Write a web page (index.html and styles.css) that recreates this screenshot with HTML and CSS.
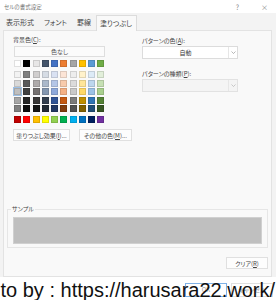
FILE: index.html
```html
<!DOCTYPE html>
<html lang="ja">
<head>
<meta charset="utf-8">
<link rel="stylesheet" href="styles.css">
</head>
<body>
<div class="dialog">
  <div class="titlebar">
    <span class="title">セルの書式設定</span>
    <span class="tb-btns"><span class="help">?</span><span class="close">×</span></span>
  </div>
  <div class="tabs">
    <span class="tab t1">表示形式</span>
    <span class="tab t2">フォント</span>
    <span class="tab t3">罫線</span>
    <span class="tab t4 active">塗りつぶし</span>
  </div>
  <div class="panel">
    <div class="cols">
      <div class="left">
        <div class="label">背景色(<u>C</u>):</div>
        <div class="nocolor">色なし</div>
        <div class="grid g-theme">
          <i style="background:#FFFFFF"></i><i style="background:#000000"></i><i style="background:#E7E6E6"></i><i style="background:#44546A"></i><i style="background:#4472C4"></i><i style="background:#ED7D31"></i><i style="background:#A5A5A5"></i><i style="background:#FFC000"></i><i style="background:#5B9BD5"></i><i style="background:#70AD47"></i>
        </div>
        <div class="grid g-shades">
          <i style="background:#F2F2F2"></i><i style="background:#7F7F7F"></i><i style="background:#D0CECE"></i><i style="background:#D6DCE4"></i><i style="background:#D9E1F2"></i><i style="background:#FCE4D6"></i><i style="background:#EDEDED"></i><i style="background:#FFF2CC"></i><i style="background:#DDEBF7"></i><i style="background:#E2EFDA"></i>
          <i style="background:#D9D9D9"></i><i style="background:#595959"></i><i style="background:#AEAAAA"></i><i style="background:#ACB9CA"></i><i style="background:#B4C6E7"></i><i style="background:#F8CBAD"></i><i style="background:#DBDBDB"></i><i style="background:#FFE699"></i><i style="background:#BDD7EE"></i><i style="background:#C6E0B4"></i>
          <i class="sel" style="background:#BFBFBF"></i><i style="background:#404040"></i><i style="background:#757171"></i><i style="background:#8497B0"></i><i style="background:#8EA9DB"></i><i style="background:#F4B084"></i><i style="background:#C9C9C9"></i><i style="background:#FFD966"></i><i style="background:#9BC2E6"></i><i style="background:#A9D08E"></i>
          <i style="background:#A6A6A6"></i><i style="background:#262626"></i><i style="background:#3A3838"></i><i style="background:#333F4F"></i><i style="background:#305496"></i><i style="background:#C65911"></i><i style="background:#7B7B7B"></i><i style="background:#BF8F00"></i><i style="background:#2F75B5"></i><i style="background:#548235"></i>
          <i style="background:#808080"></i><i style="background:#0D0D0D"></i><i style="background:#161616"></i><i style="background:#222B35"></i><i style="background:#203764"></i><i style="background:#833C0C"></i><i style="background:#525252"></i><i style="background:#806000"></i><i style="background:#1F4E78"></i><i style="background:#375623"></i>
        </div>
        <div class="grid g-std">
          <i style="background:#C00000"></i><i style="background:#FF0000"></i><i style="background:#FFC000"></i><i style="background:#FFFF00"></i><i style="background:#92D050"></i><i style="background:#00B050"></i><i style="background:#00B0F0"></i><i style="background:#0070C0"></i><i style="background:#002060"></i><i style="background:#7030A0"></i>
        </div>
        <div class="btnrow">
          <span class="btn b1">塗りつぶし効果(<u>I</u>)...</span>
          <span class="btn b2">その他の色(<u>M</u>)...</span>
        </div>
      </div>
      <div class="right">
        <div class="label">パターンの色(<u>A</u>):</div>
        <div class="select"><span class="val">自動</span><span class="chev"><svg width="5" height="3" viewBox="0 0 5 3"><path d="M0.5 0.5 L2.5 2.5 L4.5 0.5" fill="none" stroke="#888" stroke-width="0.6"/></svg></span></div>
        <div class="label l2">パターンの種類(<u>P</u>):</div>
        <div class="select disabled"><span class="val"></span><span class="chev"><svg width="5" height="3" viewBox="0 0 5 3"><path d="M0.5 0.5 L2.5 2.5 L4.5 0.5" fill="none" stroke="#aaa" stroke-width="0.6"/></svg></span></div>
      </div>
    </div>
    <div class="sample">
      <span class="legend">サンプル</span>
      <div class="swatch"></div>
    </div>
    <div class="clearrow"><span class="btn clear">クリア(<u>R</u>)</span></div>
  </div>
  <div class="footer">
    <span class="fbtn ok">OK</span>
    <span class="fbtn cancel">キャンセル</span>
    <div class="watermark">to by : https://harusara22.work/</div>
  </div>
</div>
</body>
</html>
```

FILE: styles.css
```css
html, body {
  margin: 0;
  padding: 0;
  background: #ffffff;
}
body {
  width: 276px;
  height: 300px;
  overflow: hidden;
  font-family: "Noto Sans CJK JP", "Noto Sans", sans-serif;
  font-feature-settings: "palt";
  color: #333;
}
.dialog {
  width: 276px;
  height: 300px;
  background: #f3f3f3;
  display: flex;
  flex-direction: column;
}
.titlebar {
  height: 13px;
  background: #ffffff;
  display: flex;
  align-items: center;
  justify-content: space-between;
  padding: 0 8px 0 4px;
  font-size: 5.5px;
  color: #777;
}
.tb-btns {
  display: flex;
  gap: 22px;
  font-size: 7px;
  color: #888;
}
.tabs {
  height: 17px;
  display: flex;
  align-items: flex-end;
  padding-left: 1px;
  background: #f3f3f3;
}
.tab {
  font-size: 7px;
  line-height: 15px;
  padding: 0 4px;
  color: #444;
  border: 1px solid transparent;
  border-bottom: none;
}
.t4 { padding: 0 4px 0 3px; }
.tab.active {
  background: #f9f9f9;
  border-color: #dcdcdc;
  position: relative;
  top: 1px;
}
.panel {
  margin: 0 4px 0 3px;
  height: 247px;
  background: #f9f9f9;
  border: 1px solid #e3e3e3;
  box-sizing: border-box;
  display: flex;
  flex-direction: column;
}
.cols {
  display: flex;
  padding: 5px 0 0 9px;
  height: 172px;
  box-sizing: border-box;
}
.left {
  width: 122px;
}
.right {
  padding-left: 7px;
  padding-top: 1px;
}
.label {
  font-size: 6px;
  line-height: 8px;
  color: #444;
}
.label u { text-decoration: underline; }
.nocolor {
  margin: 2px 0 0 1px;
  width: 89px;
  height: 9px;
  background: #fbfbfb;
  border: 1px solid #dedede;
  font-size: 6px;
  line-height: 9px;
  text-align: center;
  color: #555;
}
.grid {
  display: grid;
  grid-template-columns: repeat(10, 7px);
  column-gap: 2.27px;
  row-gap: 1.6px;
  margin-left: 1px;
}
.grid i {
  display: block;
  width: 7px;
  height: 7px;
  box-sizing: border-box;
  border: 0.5px solid rgba(0,0,0,0.12);
}
.grid i.sel {
  outline: 1px solid #9cc0e6;
}
.g-theme { margin-top: 3px; }
.g-shades { margin-top: 4px; }
.g-std { margin-top: 4px; }
.btnrow {
  display: flex;
  gap: 9px;
  margin-top: 6px;
}
.btn {
  display: inline-block;
  height: 12px;
  line-height: 12px;
  font-size: 6px;
  background: #fdfdfd;
  border: 1px solid #e0e0e0;
  box-sizing: border-box;
  text-align: center;
  color: #444;
}
.b1 { width: 57px; }
.b2 { width: 53px; }
.select {
  margin-top: 1px;
  width: 96px;
  height: 13px;
  background: #ffffff;
  border: 1px solid #dcdcdc;
  box-sizing: border-box;
  display: flex;
  align-items: center;
}
.select .val {
  flex: 1;
  text-align: center;
  font-size: 6px;
  color: #333;
}
.select .chev {
  width: 8px;
  height: 11px;
  border-left: 1px solid #e6e6e6;
  display: flex;
  align-items: center;
  justify-content: center;
}
.select.disabled {
  background: #f4f4f4;
  border-color: #e2e2e2;
}
.l2 { margin-top: 11px; }
.sample {
  position: relative;
  margin: 6px 3px 0 3px;
  height: 39px;
  border: 1px solid #e6e6e6;
  box-sizing: border-box;
  padding: 7px 5px 3px 5px;
}
.legend {
  position: absolute;
  top: -5px;
  left: 3px;
  font-size: 6px;
  line-height: 8px;
  background: #f9f9f9;
  padding: 0 1px;
  color: #444;
}
.swatch {
  height: 27px;
  background: #bfbfbf;
  border: 1px solid #d0d0d0;
  box-sizing: border-box;
}
.clearrow {
  display: flex;
  justify-content: flex-end;
  padding: 9px 3px 0 0;
}
.clear { width: 42px; }
.footer {
  position: relative;
  flex: 1;
  background: #ffffff;
}
.fbtn {
  position: absolute;
  top: 6px;
  height: 14px;
  width: 42px;
  box-sizing: border-box;
  font-size: 6px;
  line-height: 12px;
  text-align: center;
  color: #999;
  border: 1px solid #e0e0e0;
}
.ok { left: 185px; border-color: #7fb1e6; }
.cancel { left: 231px; }
.watermark {
  position: absolute;
  left: 0.5px;
  top: 0;
  font-family: "Liberation Sans", Arial, sans-serif;
  font-size: 20px;
  line-height: 26px;
  color: #111;
  white-space: nowrap;
}
```
